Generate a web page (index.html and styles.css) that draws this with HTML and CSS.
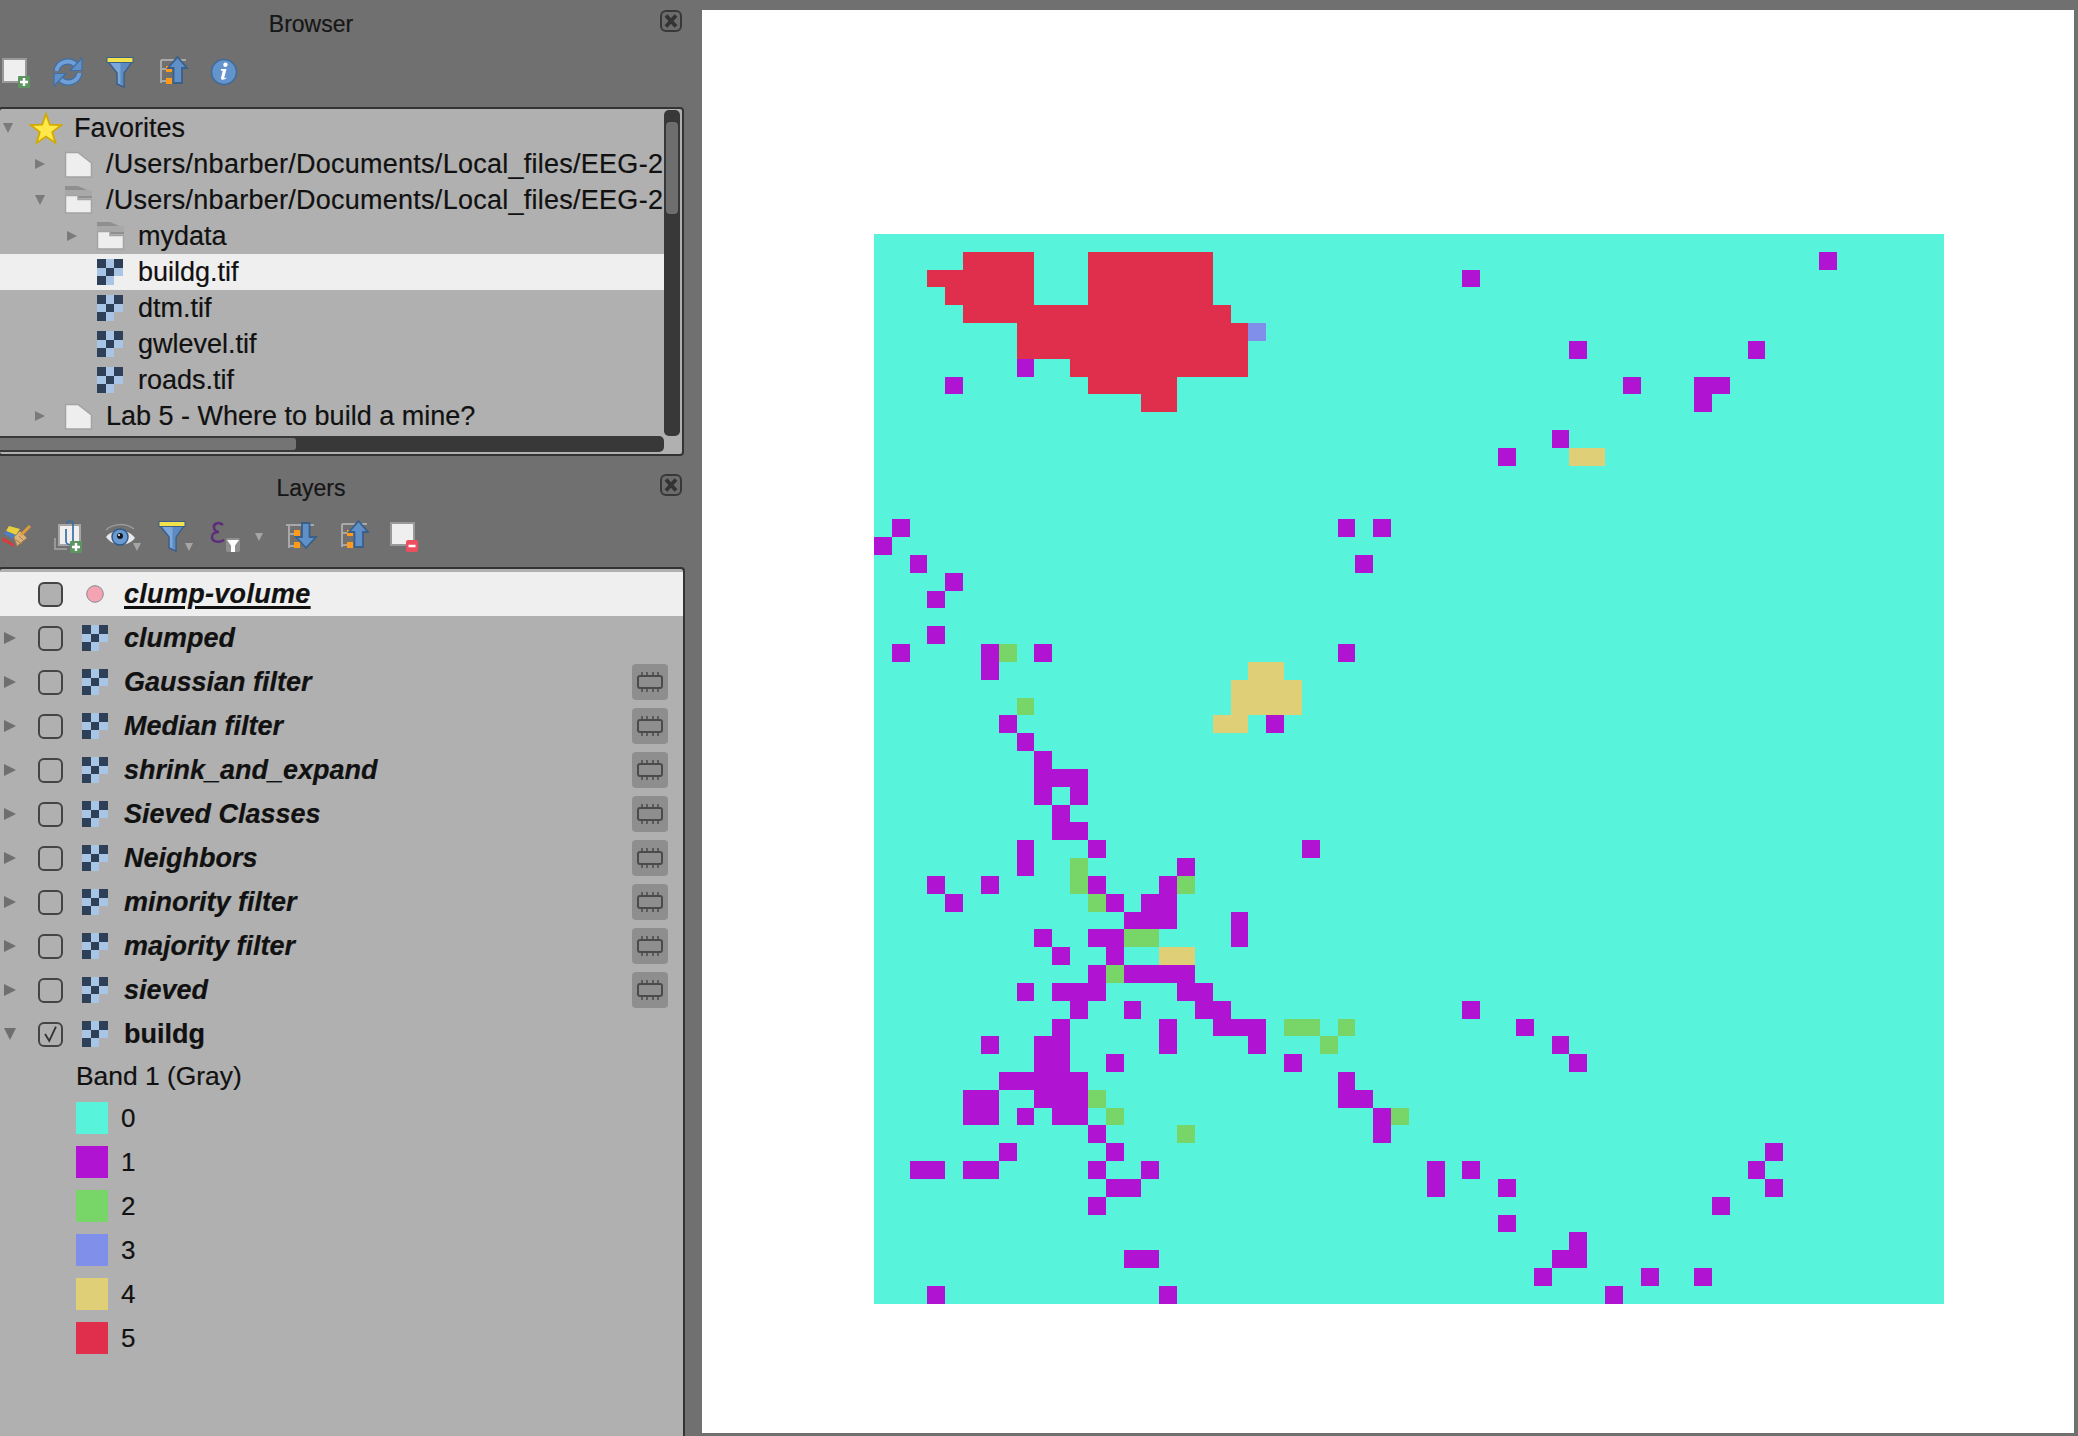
FILE: index.html
```html
<!DOCTYPE html>
<html lang="en">
<head>
<meta charset="utf-8">
<title>QGIS Browser and Layers</title>
<link rel="stylesheet" href="styles.css">
</head>
<body>
<svg class="sprite" aria-hidden="true">
  <symbol id="raster" viewBox="0 0 26 26">
    <path fill="#a9c5e6" d="M9 0h8v9H9zM0 9h9v8H0zM17 9h9v8h-9zM9 17h8v9H9z"/>
    <path fill="#2e3f58" d="M0 0h9v9H0zM17 0h9v9h-9zM9 9h8v8H9zM0 17h9v9H0z"/>
  </symbol>
  <symbol id="folder" viewBox="0 0 32 32">
    <path fill="#eeeeee" stroke="#a3a3a3" stroke-width="1.500" d="M3.500 4.500H16L29.500 15v14H3.500z"/>
  </symbol>
  <symbol id="folder-open" viewBox="0 0 32 32">
    <path fill="#8f8f8f" d="M3 2h13l14 6v6H3z"/>
    <path fill="#a8a8a8" d="M3 6h27v6H3z"/>
    <path fill="#eeeeee" stroke="#a3a3a3" stroke-width="1.500" d="M3.500 11.500H16v4h13.500v13.500H3.500z"/>
  </symbol>
  <symbol id="close" viewBox="0 0 22 22">
    <rect x="1" y="1" width="20" height="20" rx="5" fill="#6c6c6c" stroke="#383838" stroke-width="2"/>
    <path d="M6 5.500l10 11M16 5.500l-10 11" stroke="#333333" stroke-width="3.800"/>
  </symbol>
  <symbol id="chip" viewBox="0 0 36 36">
    <rect x="6" y="12" width="24" height="12" rx="2" fill="none" stroke="#4b4b4b" stroke-width="2"/>
    <path d="M10 8v4M15 8v4M21 8v4M26 8v4M10 24v4M15 24v4M21 24v4M26 24v4" stroke="#4b4b4b" stroke-width="1.500"/>
  </symbol>
  <symbol id="funnel" viewBox="0 0 32 32">
    <path fill="#7ba7da" stroke="#3a5f88" stroke-width="1.500" d="M3.500 5h25L20 17v14l-7-3V17z"/>
    <path fill="#5d8ac0" d="M16.500 6.500h10L19 17v12l-2.500-1z"/>
    <rect x="3" y="1.500" width="26" height="5" fill="#f2e24c" stroke="#3a5f88" stroke-width="1"/>
  </symbol>
  <symbol id="tree-up" viewBox="0 0 32 32">
    <path d="M5 4v23M5 4h25M5 13h6M5 25h6" stroke="#a8a8a8" stroke-width="2" fill="none"/>
    <path fill="#ff9a1a" d="M10 10h6v6h-6zM10 22h6v6h-6z"/>
    <path fill="#5f90c8" stroke="#3a5f88" stroke-width="1.800" d="M21.500 1L31 12h-5v15h-8.500V12H12z"/>
  </symbol>
  <symbol id="tree-down" viewBox="0 0 32 32">
    <path d="M4 5v23M1 5h28M4 14h6M4 26h6" stroke="#a8a8a8" stroke-width="2" fill="none"/>
    <path fill="#ff9a1a" d="M9 10h6v6H9zM9 22h6v6H9z"/>
    <path fill="#5f90c8" stroke="#3a5f88" stroke-width="1.800" d="M17 3h7.500v14H31L21 28 11 17h6z"/>
  </symbol>
</svg>

<div class="app">
  <aside class="side">
    <section class="panel">
      <header class="panel-title">
        <span>Browser</span>
        <svg class="close"><use href="#close"/></svg>
      </header>
      <div class="toolbar toolbar-browser">
        <svg class="tool" viewBox="0 0 32 32">
          <rect x="3" y="3" width="23" height="23" fill="#efefef" stroke="#999999" stroke-width="2"/>
          <rect x="18" y="20" width="12" height="12" rx="1" fill="#5d9560"/>
          <path d="M24 22v8M20 26h8" stroke="#ffffff" stroke-width="2.500"/>
        </svg>
        <svg class="tool" viewBox="0 0 32 32">
          <path d="M4.500 15C6 6 17 2.500 24 9" fill="none" stroke="#3f6fa5" stroke-width="6.500"/>
          <path d="M27.500 17C26 26 15 29.500 8 23" fill="none" stroke="#3f6fa5" stroke-width="6.500"/>
          <path d="M4.500 15C6 6 17 2.500 24 9M27.500 17C26 26 15 29.500 8 23" fill="none" stroke="#6f9fd6" stroke-width="4"/>
          <path d="M30 2v12.500H18z" fill="#5f90c8" stroke="#3f6fa5" stroke-width="1.200"/>
          <path d="M2 30V17.500h12z" fill="#5f90c8" stroke="#3f6fa5" stroke-width="1.200"/>
        </svg>
        <svg class="tool"><use href="#funnel"/></svg>
        <svg class="tool"><use href="#tree-up"/></svg>
        <svg class="tool" viewBox="0 0 32 32">
          <circle cx="16" cy="16" r="12.500" fill="#6394cc" stroke="#3f6a9c" stroke-width="1.500"/>
          <path fill="#ffffff" d="M17.500 6.500a2.200 2.200 0 1 1-.1 4.400 2.200 2.200 0 0 1 .1-4.400zM13 13h5.500l-2.200 8.500c-.2.800.6.900 1.800.1l.4.700c-2 1.700-6 2.300-5.500-.6l1.700-6.800-1.900-.4z"/>
        </svg>
      </div>
      <div class="box tree">
        <ul class="tree-rows">
          <li class="tree-row">
            <i class="arrow arrow-down"></i>
            <svg class="tree-icon" viewBox="0 0 32 32"><path fill="#ffe94a" stroke="#d3a900" stroke-width="1.800" d="M16 2l3.800 10.700 11.400.4-9 6.900 3.200 10.900L16 24.500l-9.400 6.400 3.200-10.900-9-6.900 11.400-.4z"/></svg>
            <span class="label">Favorites</span>
          </li>
          <li class="tree-row level-1">
            <i class="arrow arrow-right"></i>
            <svg class="tree-icon"><use href="#folder"/></svg>
            <span class="label label-path">/Users/nbarber/Documents/Local_files/EEG-2</span>
          </li>
          <li class="tree-row level-1">
            <i class="arrow arrow-down"></i>
            <svg class="tree-icon"><use href="#folder-open"/></svg>
            <span class="label label-path">/Users/nbarber/Documents/Local_files/EEG-2</span>
          </li>
          <li class="tree-row level-2">
            <i class="arrow arrow-right"></i>
            <svg class="tree-icon"><use href="#folder-open"/></svg>
            <span class="label">mydata</span>
          </li>
          <li class="tree-row level-2 is-current">
            <i class="arrow"></i>
            <svg class="tree-icon raster-icon"><use href="#raster"/></svg>
            <span class="label">buildg.tif</span>
          </li>
          <li class="tree-row level-2">
            <i class="arrow"></i>
            <svg class="tree-icon raster-icon"><use href="#raster"/></svg>
            <span class="label">dtm.tif</span>
          </li>
          <li class="tree-row level-2">
            <i class="arrow"></i>
            <svg class="tree-icon raster-icon"><use href="#raster"/></svg>
            <span class="label">gwlevel.tif</span>
          </li>
          <li class="tree-row level-2">
            <i class="arrow"></i>
            <svg class="tree-icon raster-icon"><use href="#raster"/></svg>
            <span class="label">roads.tif</span>
          </li>
          <li class="tree-row level-1">
            <i class="arrow arrow-right"></i>
            <svg class="tree-icon"><use href="#folder"/></svg>
            <span class="label">Lab 5 - Where to build a mine?</span>
          </li>
        </ul>
        <div class="vscroll"><div class="vscroll-thumb"></div></div>
        <div class="hscroll"><div class="hscroll-thumb"></div></div>
      </div>
    </section>

    <section class="panel panel-layers">
      <header class="panel-title">
        <span>Layers</span>
        <svg class="close close-layers"><use href="#close"/></svg>
      </header>
      <div class="toolbar toolbar-layers">
        <svg class="tool" viewBox="0 0 32 32">
          <path fill="#e8cf3c" d="M9 6l11 3-4 6-10-4z"/>
          <path fill="#4f7fc0" d="M6 11l10 4-3 4-9-5z"/>
          <path fill="#d93c3c" d="M3 17l11 7 1 3-13-6z"/>
          <path fill="#d9b27c" stroke="#a9814e" d="M14 17l6-6 7 7-10 8z"/>
          <path d="M16 20l6 4M19 16l5 5" stroke="#a9814e"/>
          <path d="M30 6l-9 9" stroke="#e09a3a" stroke-width="3"/>
        </svg>
        <svg class="tool" viewBox="0 0 32 32">
          <path d="M3 18v11h12" fill="none" stroke="#999999" stroke-width="2"/>
          <rect x="7" y="5" width="21" height="20" fill="#efefef" stroke="#a5a5a5" stroke-width="2"/>
          <path d="M14 9v12a3.500 3.500 0 0 0 7 0V4a3 3 0 0 0-6 0" fill="none" stroke="#3a6ea5" stroke-width="1.700"/>
          <rect x="18" y="21" width="12" height="12" rx="1" fill="#5d9560"/>
          <path d="M24 23v8M20 27h8" stroke="#ffffff" stroke-width="2.500"/>
        </svg>
        <svg class="tool" viewBox="0 0 32 32">
          <path d="M2 10C9 3 22 3 30 9" fill="none" stroke="#9a9a9a" stroke-width="1.500"/>
          <path d="M2 17C8 9 24 8 31 18 24 27 9 27 2 17z" fill="#e8e8e8"/>
          <circle cx="16" cy="17" r="8" fill="#6a9ad0" stroke="#2f5a8a" stroke-width="1.500"/>
          <circle cx="16" cy="16" r="3" fill="#101820"/>
          <circle cx="15" cy="15" r="1" fill="#ffffff"/>
          <path class="drop" d="M29 23h8l-4 8z"/>
        </svg>
        <svg class="tool" viewBox="0 0 32 32">
          <use href="#funnel" width="32" height="32"/>
          <path class="drop" d="M29 23h8l-4 8z"/>
        </svg>
        <svg class="tool tool-wide" viewBox="0 0 32 32">
          <path d="M15 5C10 1 5 4 6 8c.5 3 3 4 5 4-4 0-7 2-7 5 0 5 7 6 12 3" fill="none" stroke="#5c2d7a" stroke-width="2.500"/>
          <rect x="18" y="18" width="14" height="14" rx="2" fill="#8f8f8f"/>
          <path fill="#ffffff" d="M19 20h12l-4 5.500v6.500h-4v-6.500z"/>
          <path class="drop" d="M47 13h8l-4 8z"/>
        </svg>
        <svg class="tool"><use href="#tree-down"/></svg>
        <svg class="tool"><use href="#tree-up"/></svg>
        <svg class="tool" viewBox="0 0 32 32">
          <rect x="2" y="3" width="23" height="22" fill="#efefef" stroke="#999999" stroke-width="2"/>
          <rect x="17" y="20" width="12" height="12" rx="2" fill="#ee4f5f"/>
          <path d="M19.500 26h7" stroke="#ffffff" stroke-width="2.500"/>
        </svg>
      </div>
      <div class="box layers">
        <div class="layer is-current">
          <i class="arrow-wide"></i>
          <span class="check check-active"></span>
          <span class="layer-icon"><svg class="point" viewBox="0 0 18 18"><circle cx="9" cy="9" r="8.300" fill="#f4a3b2" stroke="#8a8a8a" stroke-width="1"/></svg></span>
          <span class="layer-name is-italic is-underline">clump-volume</span>
        </div>
        <div class="layer">
          <i class="arrow-wide arrow-right"></i>
          <span class="check"></span>
          <svg class="layer-icon"><use href="#raster"/></svg>
          <span class="layer-name is-italic">clumped</span>
        </div>
        <div class="layer">
          <i class="arrow-wide arrow-right"></i>
          <span class="check"></span>
          <svg class="layer-icon"><use href="#raster"/></svg>
          <span class="layer-name is-italic">Gaussian filter</span>
          <svg class="chip"><use href="#chip"/></svg>
        </div>
        <div class="layer">
          <i class="arrow-wide arrow-right"></i>
          <span class="check"></span>
          <svg class="layer-icon"><use href="#raster"/></svg>
          <span class="layer-name is-italic">Median filter</span>
          <svg class="chip"><use href="#chip"/></svg>
        </div>
        <div class="layer">
          <i class="arrow-wide arrow-right"></i>
          <span class="check"></span>
          <svg class="layer-icon"><use href="#raster"/></svg>
          <span class="layer-name is-italic">shrink_and_expand</span>
          <svg class="chip"><use href="#chip"/></svg>
        </div>
        <div class="layer">
          <i class="arrow-wide arrow-right"></i>
          <span class="check"></span>
          <svg class="layer-icon"><use href="#raster"/></svg>
          <span class="layer-name is-italic">Sieved Classes</span>
          <svg class="chip"><use href="#chip"/></svg>
        </div>
        <div class="layer">
          <i class="arrow-wide arrow-right"></i>
          <span class="check"></span>
          <svg class="layer-icon"><use href="#raster"/></svg>
          <span class="layer-name is-italic">Neighbors</span>
          <svg class="chip"><use href="#chip"/></svg>
        </div>
        <div class="layer">
          <i class="arrow-wide arrow-right"></i>
          <span class="check"></span>
          <svg class="layer-icon"><use href="#raster"/></svg>
          <span class="layer-name is-italic">minority filter</span>
          <svg class="chip"><use href="#chip"/></svg>
        </div>
        <div class="layer">
          <i class="arrow-wide arrow-right"></i>
          <span class="check"></span>
          <svg class="layer-icon"><use href="#raster"/></svg>
          <span class="layer-name is-italic">majority filter</span>
          <svg class="chip"><use href="#chip"/></svg>
        </div>
        <div class="layer">
          <i class="arrow-wide arrow-right"></i>
          <span class="check"></span>
          <svg class="layer-icon"><use href="#raster"/></svg>
          <span class="layer-name is-italic">sieved</span>
          <svg class="chip"><use href="#chip"/></svg>
        </div>
        <div class="layer">
          <i class="arrow-wide arrow-down"></i>
          <span class="check">
            <svg class="tick" viewBox="0 0 25 25"><path d="M6 12l5 8L19 3" fill="none" stroke="#333333" stroke-width="2.200"/></svg>
          </span>
          <svg class="layer-icon"><use href="#raster"/></svg>
          <span class="layer-name">buildg</span>
        </div>
        <div class="band">Band 1 (Gray)</div>
        <ul class="legend">
          <li class="legend-row"><span class="swatch c0"></span>0</li>
          <li class="legend-row"><span class="swatch c1"></span>1</li>
          <li class="legend-row"><span class="swatch c2"></span>2</li>
          <li class="legend-row"><span class="swatch c3"></span>3</li>
          <li class="legend-row"><span class="swatch c4"></span>4</li>
          <li class="legend-row"><span class="swatch c5"></span>5</li>
        </ul>
      </div>
    </section>
  </aside>

  <main class="canvas">
    <svg class="map" viewBox="0 0 60 60" shape-rendering="crispEdges">
      <rect class="map-bg" width="60" height="60"/>
      <path class="m5" d="M5 1.500h4M12 1.500h7M3 2.500h6M12 2.500h7M4 3.500h5M12 3.500h7M5 4.500h15M8 5.500h13M8 6.500h13M11 7.500h10M12 8.500h5M15 9.500h2"/>
      <path class="m3" d="M21 5.500h1"/>
      <path class="m4" d="M39 12.500h2M21 24.500h2M20 25.500h4M20 26.500h4M19 27.500h2M16 40.500h2"/>
      <path class="m2" d="M7 23.500h1M8 26.500h1M11 35.500h1M11 36.500h1M17 36.500h1M12 37.500h1M14 39.500h2M13 41.500h1M23 44.500h2M26 44.500h1M25 45.500h1M12 48.500h1M13 49.500h1M29 49.500h1M17 50.500h1"/>
      <path class="m1" d="M53 1.500h1M33 2.500h1M39 6.500h1M49 6.500h1M8 7.500h1M4 8.500h1M42 8.500h1M46 8.500h2M46 9.500h1M38 11.500h1M35 12.500h1M1 16.500h1M26 16.500h1M28 16.500h1M0 17.500h1M2 18.500h1M27 18.500h1M4 19.500h1M3 20.500h1M3 22.500h1M1 23.500h1M6 23.500h1M9 23.500h1M26 23.500h1M6 24.500h1M7 27.500h1M22 27.500h1M8 28.500h1M9 29.500h1M9 30.500h3M9 31.500h1M11 31.500h1M10 32.500h1M10 33.500h2M8 34.500h1M12 34.500h1M24 34.500h1M8 35.500h1M17 35.500h1M3 36.500h1M6 36.500h1M12 36.500h1M16 36.500h1M4 37.500h1M13 37.500h1M15 37.500h2M14 38.500h3M20 38.500h1M9 39.500h1M12 39.500h2M20 39.500h1M10 40.500h1M13 40.500h1M12 41.500h1M14 41.500h4M8 42.500h1M10 42.500h3M17 42.500h2M11 43.500h1M14 43.500h1M18 43.500h2M33 43.500h1M10 44.500h1M16 44.500h1M19 44.500h3M36 44.500h1M6 45.500h1M9 45.500h2M16 45.500h1M21 45.500h1M38 45.500h1M9 46.500h2M13 46.500h1M23 46.500h1M39 46.500h1M7 47.500h5M26 47.500h1M5 48.500h2M9 48.500h3M26 48.500h2M5 49.500h2M8 49.500h1M10 49.500h2M28 49.500h1M12 50.500h1M28 50.500h1M7 51.500h1M13 51.500h1M50 51.500h1M2 52.500h2M5 52.500h2M12 52.500h1M15 52.500h1M31 52.500h1M33 52.500h1M49 52.500h1M13 53.500h2M31 53.500h1M35 53.500h1M50 53.500h1M12 54.500h1M47 54.500h1M35 55.500h1M39 56.500h1M14 57.500h2M38 57.500h2M37 58.500h1M43 58.500h1M46 58.500h1M3 59.500h1M16 59.500h1M41 59.500h1"/>
    </svg>
  </main>
</div>
</body>
</html>
```
FILE: styles.css
```css
* { box-sizing: border-box; }

html, body {
  margin: 0;
  height: 100%;
  overflow: hidden;
}

body {
  background: #707070;
  color: #111111;
  font-family: "Liberation Sans", Arial, sans-serif;
  -webkit-text-stroke: 0.2px currentColor;
}

ul { list-style: none; margin: 0; padding: 0; }
i { display: block; flex: none; }

.sprite { position: absolute; width: 0; height: 0; }
symbol { overflow: visible; }
svg { overflow: visible; display: block; flex: none; }

.app {
  display: flex;
  height: 100vh;
}

.side {
  flex: none;
  width: 702px;
  display: flex;
  flex-direction: column;
}

.panel { flex: none; }

.panel-layers {
  flex: 1;
  min-height: 0;
  margin-top: 8px;
  display: flex;
  flex-direction: column;
}

.panel-title {
  position: relative;
  height: 48px;
  width: 622px;
  padding-top: 1px;
  display: flex;
  align-items: center;
  justify-content: center;
  font-size: 23px;
  color: #161616;
}

.close {
  position: absolute;
  left: 660px;
  top: 10px;
  width: 22px;
  height: 22px;
}

.toolbar {
  display: flex;
  align-items: center;
  gap: 20px;
  height: 48px;
}

.toolbar-browser { margin-bottom: 11px; }
.toolbar-layers { margin-bottom: 7px; }

.tool { width: 32px; height: 32px; }
.tool-wide { margin-right: 25px; }
.drop { fill: #a5a5a5; }

.box {
  margin-left: -2px;
  border: 2px solid #333333;
  border-radius: 4px;
  background: #b0b0b0;
}

.tree {
  width: 686px;
  height: 349px;
  padding: 1px 2px 2px 0;
  display: grid;
  grid-template-columns: 664px 16px;
  grid-template-rows: 326px 16px;
}

.tree-rows { font-size: 27px; }

.tree-row {
  display: flex;
  align-items: center;
  height: 36px;
  padding-right: 2px;
}

.level-1 { padding-left: 32px; }
.level-2 { padding-left: 64px; }

.is-current { background: #efefef; }

.arrow {
  width: 16px;
  height: 10px;
  margin-right: 14px;
  color: #7a7a7a;
}

.arrow-right {
  clip-path: polygon(3px 0, 13px 5px, 3px 10px);
  background: currentColor;
}

.arrow-down {
  clip-path: polygon(3px 0, 13px 0, 8px 10px);
  background: currentColor;
}

.tree-icon { width: 32px; height: 32px; margin-right: 12px; }
.raster-icon { width: 26px; height: 26px; margin: 0 15px 0 3px; }

.label {
  min-width: 0;
  white-space: nowrap;
}

.label-path { letter-spacing: 0.26px; }

.vscroll {
  background: #383838;
  border-radius: 5px;
  padding: 12px 2px 0;
}

.vscroll-thumb {
  height: 92px;
  background: #6e6e6e;
  border-radius: 4px;
}

.hscroll {
  background: #383838;
  border-radius: 0 5px 5px 0;
  padding: 2px 0;
}

.hscroll-thumb {
  width: 296px;
  height: 12px;
  background: #747474;
  border-radius: 0 3px 3px 0;
}

.layers {
  flex: 1;
  width: 687px;
  border-bottom: 0;
  border-radius: 4px 4px 0 0;
  padding-top: 3px;
}

.layer {
  display: flex;
  align-items: center;
  height: 44px;
  padding-right: 15px;
  font-size: 27px;
  font-weight: 700;
}

.arrow-wide {
  width: 12px;
  height: 12px;
  margin-left: 4px;
  margin-right: 22px;
  color: #6f6f6f;
  background: currentColor;
}

.layer.is-current .arrow-wide { background: none; }
.arrow-wide.arrow-right { clip-path: polygon(0 0, 12px 6px, 0 12px); }
.arrow-wide.arrow-down { clip-path: polygon(0 0, 12px 0, 6px 12px); }

.check {
  flex: none;
  width: 25px;
  height: 25px;
  border: 2px solid #444444;
  border-radius: 6px;
  margin-right: 19px;
}

.check-active { background: #b0b0b0; }
.tick { width: 21px; height: 21px; }

.layer-icon {
  flex: none;
  width: 26px;
  height: 26px;
  margin-right: 16px;
  display: flex;
  align-items: center;
  justify-content: center;
}

.point { width: 18px; height: 18px; }

.layer-name { white-space: nowrap; }
.is-italic { font-style: italic; }
.is-underline {
  letter-spacing: 0.3px;
  text-decoration: underline;
  text-decoration-thickness: 3px;
  text-underline-offset: 3px;
}

.chip {
  width: 36px;
  height: 36px;
  margin-left: auto;
  background: #8e8e8e;
  border-radius: 4px;
}

.band {
  height: 40px;
  display: flex;
  align-items: center;
  padding-left: 76px;
  font-size: 26.400px;
}

.legend-row {
  display: flex;
  align-items: center;
  gap: 13px;
  height: 44px;
  padding-left: 76px;
  font-size: 26px;
}

.swatch {
  width: 32px;
  height: 32px;
}

.c0 { background: #57f3da; }
.c1 { background: #b013d1; }
.c2 { background: #77d667; }
.c3 { background: #7f8fea; }
.c4 { background: #dfcf76; }
.c5 { background: #df2f4d; }

.canvas {
  flex: 1;
  margin: 10px 4px 3px 0;
  padding: 224px 0 0 172px;
  background: #ffffff;
}

.map { width: 1069.800px; height: 1069.800px; }
.map-bg { fill: #57f3da; }

.m1, .m2, .m3, .m4, .m5 { fill: none; stroke-width: 1; }
.m1 { stroke: #b013d1; }
.m2 { stroke: #77d667; }
.m3 { stroke: #7f8fea; }
.m4 { stroke: #dfcf76; }
.m5 { stroke: #df2f4d; }
```
